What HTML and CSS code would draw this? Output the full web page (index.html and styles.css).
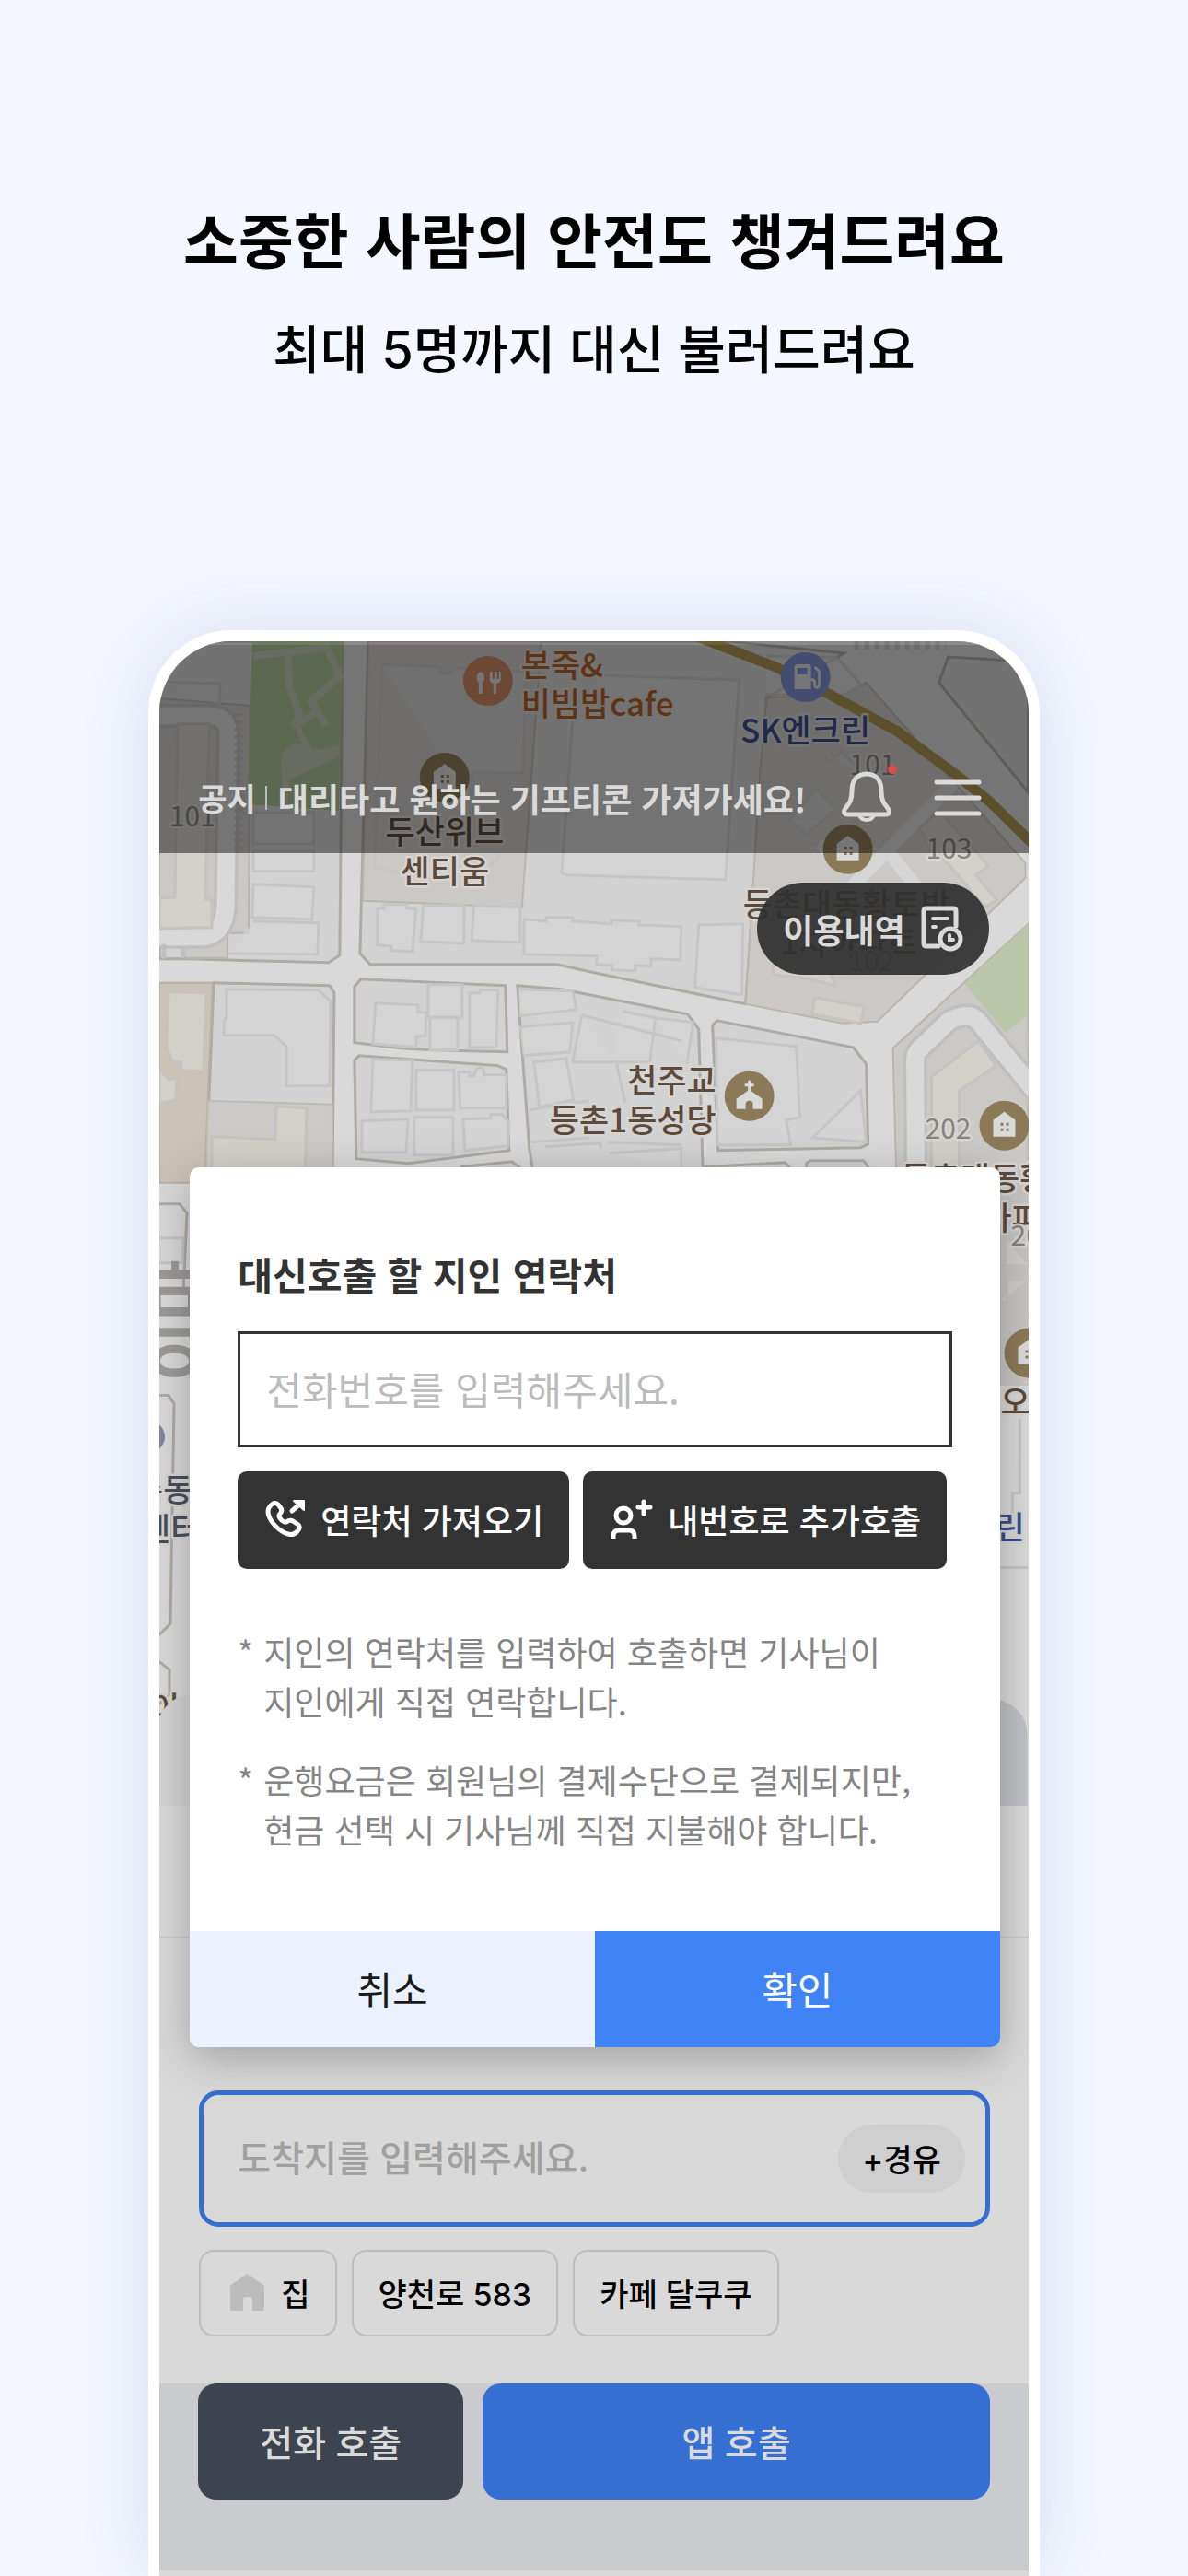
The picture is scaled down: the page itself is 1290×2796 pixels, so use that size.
FILE: index.html
```html
<!DOCTYPE html>
<html lang="ko">
<head>
    <meta charset="UTF-8">
    <meta name="viewport" content="width=device-width, initial-scale=1.0">
    <title>대신호출</title>
    <link rel="stylesheet" href="styles.css">
</head>
<body>
    <header class="intro">
        <h1>소중한 사람의 안전도 챙겨드려요</h1>
        <p>최대 5명까지 대신 불러드려요</p>
    </header>

    <main class="phone">
        <section class="map-area">
            <svg class="map" viewBox="173 696 944 1265" preserveAspectRatio="xMidYMin slice" aria-hidden="true">
                <defs>
                    <g id="house">
                        <circle r="27" fill="#8b7a57"/>
                        <path d="M0-15 12-6V12H-12V-6Z" fill="#dadada"/>
                        <path d="M-4-3h3v3h-3zM2-3h3v3h-3zM-4 3h3v3h-3zM2 3h3v3h-3z" fill="#8b7a57"/>
                    </g>
                </defs>
                <rect x="173" y="696" width="944" height="1265" fill="#d9d9d9"/>

                <!-- blocks -->
                <g class="block">
                    <path d="M173 696H372L369 1037 357 1045 203 1041H173Z"/>
                    <path d="M400 696H790L917 709 833 757 810 1090 650 1057 605 1047H402L391 1035Z"/>
                    <path d="M232 1067 358 1070 363 1078 361 1290H223Z"/>
                    <path d="M385 1071 392 1063 549 1070 551 1142 470 1140 435 1138 385 1132Z"/>
                    <path d="M385 1151 390 1146 541 1157 550 1161 553 1249 443 1263 387 1258Z"/>
                    <path d="M562 1070 610 1074 640 1080 747 1101 759 1117 764 1290H582L575 1247Z"/>
                    <path d="M774 1113 779 1108 927 1137 941 1155 943 1242 935 1246 780 1249Z"/>
                    <path d="M876 1267V1263L880 1260H938L944 1268M764 1267 853 1262 860 1270"/>
                    <path d="M500 1267 556 1261 568 1270"/>
                    <path d="M1030 713 1117 718V860L1020 741Z"/>
                </g>
                <path d="M173 1067H231L222 1284H173Z" fill="#ccc2b8" stroke="#b5afa5" stroke-width="2"/>
                <path d="M226 1195 361 1199V1290H223Z" fill="#cbcac8" stroke="#bebbb3" stroke-width="2"/>

                <!-- apartment complexes -->
                <g class="complex">
                    <path d="M400 696H588L567 985 394 978Z"/>
                    <path d="M833 757 915 755 941 741 1114 937V953L953 1109 915 1111 810 1090 826 832Z"/>
                    <path d="M970 1138 1060 1055 1117 1003V1290H974Z"/>
                    <path d="M173 758 272 766 270 1013 247 1013V1040H203Q198 1040 198 1032V1028H173Z"/>
                </g>

                <!-- park -->
                <path d="M274 696H373L368 880 269 873Z" fill="#adc196"/>
                <g fill="none" stroke="#c0c6b5" stroke-width="8" stroke-linejoin="round">
                    <path d="M275 712 355 703 369 734 338 761 354 788"/>
                    <path d="M313 708 314 745 325 775 320 787 345 772"/>
                    <path d="M322 785 328 800 337 815 368 818" stroke-width="6"/>
                </g>
                <path d="M305 830Q305 808 326 807L340 816 368 808V821L313 847V872L309 871Z" fill="#c0c6b5"/>
                <path d="M1048 1068 1117 1003V1102L1092 1121Z" fill="#bac7a9"/>
                <path d="M928 700h100" stroke="#c2c6bc" stroke-width="10" stroke-dasharray="5 6"/>

                <!-- inner roads -->
                <g fill="none" stroke-linejoin="round">
                    <g stroke="#bfbfbf" stroke-width="26">
                        <path d="M165 777H228Q249 777 248 800L245 985Q243 1015 220 1017H165"/>
                        <path d="M995 1290 994 1150Q994 1143 1001 1137L1030 1109Q1052 1097 1062 1108L1124 1184"/>
                    </g>
                    <g stroke="#d9d9d9" stroke-width="19">
                        <path d="M165 777H228Q249 777 248 800L245 985Q243 1015 220 1017H165"/>
                        <path d="M995 1290 994 1150Q994 1143 1001 1137L1030 1109Q1052 1097 1062 1108L1124 1184"/>
                    </g>
                    <path d="M1036 850 925 963M890 915 925 945M965 925 1010 980" stroke="#d6d6d6" stroke-width="14"/>
                    <path d="M259 774V925" stroke="#bdbcba" stroke-width="9" stroke-dasharray="3 5"/>
                </g>
                <path d="M178 1025V1041M199 1028V1040" stroke="#bfbfbf" stroke-width="5"/>

                <!-- buildings -->
                <g class="building">
                    <path d="M173 740 239 742 238 765"/>
                    <path d="M275 882h66v34h-66zM275 924h66v22h-66zM275 960 341 963 339 998 274 996ZM275 1000 346 1002 345 1036 248 1035"/>
                    <path d="M415 721 478 724V731H491V725L571 729 568 839 513 838 511 870M545 925 532 942M407 943 415 721M407 943 440 946"/>
                    <path d="M622 783 610 948 615 950 788 955 803 738 650 733"/>
                    <path d="M410 987 417 986V982H442V986L452 987 448 1033 425 1032V1027L410 1026Z"/>
                    <path d="M460 983H504V1024L457 1022ZM515 983 565 985V1023L512 1021Z"/>
                    <path d="M569 998 593 1000V996H622V1000L664 1003V999L694 1000V1004L740 1006 739 1042 707 1041V1049L690 1048V1054L665 1053V1048L648 1047V1038L569 1036Z"/>
                    <path d="M759 1004 807 1003 806 1080 755 1072Z"/>
                    <path d="M246 1074 346 1075 359 1087 358 1179H311V1136L298 1124H243L244 1106 246 1105Z"/>
                    <path d="M408 1089 454 1091V1099H463L462 1125H452V1137L405 1133ZM465 1069H502V1105H465ZM467 1104H497V1140H467ZM510 1078H521V1075H541L539 1137H510Z"/>
                    <path d="M405 1150 448 1151 446 1206 403 1207ZM452 1162H493V1205H452ZM498 1164H510V1168H515Q516 1159 521 1159 526 1159 526 1167H550V1203H500Z"/>
                    <path d="M393 1217 443 1215 441 1251H393ZM450 1213H492V1254H450ZM503 1215 533 1214V1210H546L552 1218V1244L505 1249Z"/>
                    <path d="M564 1074 622 1076 626 1096 564 1103M564 1115 622 1110 619 1142 568 1146M580 1153 615 1149 623 1194 586 1202ZM632 1102 740 1130M632 1102 622 1153H670M676 1098 712 1105 706 1153H666M712 1105 753 1110 746 1155M670 1155 679 1197M576 1205 640 1195M577 1240 640 1235M592 1245 652 1241V1247M660 1240 740 1243M662 1252 740 1247V1267"/>
                    <path d="M778 1127 865 1136 869 1213 854 1216 859 1243H779Z"/>
                    <path d="M883 1235 935 1184 941 1240Z"/>
                    <path d="M833 712 910 714 936 744 915 755 832 754"/>
                    <path d="M890 812 901 827 914 816 952 854M858 890 887 856 908 878 876 906Z"/>
                </g>
                <g class="apartment">
                    <path d="M193 786H227L223 976 230 977V1007L173 1008V975L190 974Z"/>
                    <path d="M183 1077 224 1078 221 1163 197 1162V1153L187 1152 181 1137Z"/>
                    <path d="M173 1160 183 1172 192 1171 191 1194 173 1198Z"/>
                    <path d="M300 1201 333 1203 331 1290H230V1234L299 1237Z"/>
                    <path d="M998 900 1020 880 1074 940 1060 950 1083 977 1070 985Z"/>
                    <path d="M1012 1169 1063 1130 1082 1157 1042 1184V1290H1012Z"/>
                    <path d="M840 1040 900 1050 907 1070 885 1064 840 1058ZM885 1083 939 1093 935 1111 882 1101Z"/>
                </g>
                <path class="highway" d="M750 688 845 725 898 752 975 794 1040 842 1075 870 1125 919"/>

                <!-- strips beside the dialog -->
                <g class="block open">
                    <path d="M173 1307H195L203 1317 199 1405"/>
                    <path d="M173 1515H183L189 1524 185 1763 173 1775"/>
                    <path d="M173 1804 184 1813V1840L173 1850"/>
                </g>
                <path d="M1086 1267H1117V1500L1086 1505Z" fill="#c7c5c4"/>
                <g class="building">
                    <path d="M173 1344H199L198 1371H173M1092 1345V1374H1117M1086 1413H1094V1389H1117M1086 1429H1117M1086 1503H1117M1108 1540V1621H1100V1650M1086 1702H1117"/>
                </g>
                <circle cx="162" cy="1560" r="17" fill="#8286a3"/>
                <path d="M1050 1841Q1116 1841 1116 1885V1961H1050Z" fill="#bfc1c6"/>

                <!-- pins -->
                <circle cx="530" cy="739" r="27" fill="#ca8562"/>
                <path d="M522 729a6 7 0 0 1 2 12v12h-4v-12a6 7 0 0 1 2-12ZM532 729v8q0 4 4 5v11h3v-11q5-1 5-5v-8h-2v8h-2v-8h-3v8h-2v-8Z" fill="#dadada"/>
                <circle cx="875" cy="735" r="27" fill="#7d8fd0"/>
                <path d="M863 748V724q0-3 3-3h12q3 0 3 3v24ZM866 725v7h11v-7Z" fill="#dadada" fill-rule="evenodd"/>
                <path d="M881 738q5-1 4 5 0 4 3 3 2 0 2-4V729l-5-5" fill="none" stroke="#dadada" stroke-width="3"/>
                <use href="#house" x="483" y="844"/>
                <use href="#house" x="921" y="922"/>
                <use href="#house" x="1091" y="1222"/>
                <use href="#house" x="1118" y="1469"/>
                <circle cx="814" cy="1190" r="27" fill="#8b7a57"/>
                <path d="M814 1173v12M809 1178h10" stroke="#dadada" stroke-width="3"/>
                <path d="M814 1183 828 1193V1204H818V1199q0-4-4-4t-4 4v5H800V1193Z" fill="#dadada"/>

                <g class="label">
                    <text x="566" y="735" class="food">본죽&amp;</text>
                    <text x="566" y="777" class="food">비빔밥cafe</text>
                    <text x="483" y="916" text-anchor="middle">두산위브</text>
                    <text x="483" y="959" text-anchor="middle">센티움</text>
                    <text x="875" y="806" text-anchor="middle" class="station">SK엔크린</text>
                    <text x="807" y="995">등촌대동황토방</text>
                    <text x="922" y="1036" text-anchor="middle">1차아파트</text>
                    <text x="778" y="1186" text-anchor="end">천주교</text>
                    <text x="778" y="1229" text-anchor="end">등촌1동성당</text>
                    <text x="979" y="1292">등촌대동황</text>
                    <text x="1067" y="1335">아파트</text>
                    <text x="1087" y="1535">오</text>
                    <text x="1081" y="1672" class="station">린</text>
                    <text x="145" y="1631" class="office">촌동</text>
                    <text x="153" y="1674" class="office">센터</text>
                    <text x="163" y="1868">이</text>
                </g>
                <g class="number">
                    <text x="184" y="897">101</text>
                    <text x="923" y="841">101</text>
                    <text x="922" y="1054">102</text>
                    <text x="1006" y="932">103</text>
                    <text x="1005" y="1236">202</text>
                    <text x="1098" y="1352">203</text>
                </g>
                <text class="road-name" transform="translate(221 1500) rotate(-90)">이마</text>
                <path d="M173 1961V1864Q184 1841 206 1841V1961Z" fill="#d3d3d3"/>
            </svg>

            <div class="map-controls">
                <div class="topbar">
                    <span class="notice-tag">공지</span>
                    <span class="notice-line"></span>
                    <a class="notice" href="#">대리타고 원하는 기프티콘 가져가세요!</a>
                    <button class="bell" type="button" aria-label="알림">
                        <svg width="60" height="60" viewBox="0 0 60 60" fill="none" stroke="#dadada" stroke-width="5">
                            <path d="M30 4C18 4 14 13 14 23C14 33 11 36 8 40C4 45 5 48 10 48H50C55 48 56 45 52 40C49 36 46 33 46 23C46 13 42 4 30 4Z"/>
                            <path d="M22 49Q24 54 30 54Q36 54 38 49" stroke-width="4"/>
                        </svg>
                        <span class="dot"></span>
                    </button>
                    <button type="button" aria-label="메뉴">
                        <svg width="52" height="40" viewBox="0 0 52 40" stroke="#dadada" stroke-width="5" stroke-linecap="round">
                            <path d="M3 3H49M3 20H49M3 37H49"/>
                        </svg>
                    </button>
                </div>
                <button class="history" type="button">
                    이용내역
                    <svg width="46" height="50" viewBox="0 0 46 50" fill="none" stroke="#dadada" stroke-width="5" stroke-linecap="round">
                        <path d="M19 44H6Q3 44 3 41V6Q3 3 6 3H35Q38 3 38 6V22"/>
                        <path d="M13 14H29M13 23H16" stroke-width="4"/>
                        <circle cx="32" cy="36" r="11"/>
                        <path d="M31 32V37H35" stroke-width="4"/>
                    </svg>
                </button>
            </div>
        </section>

        <section class="sheet">
            <div class="destination">
                <label class="hidden" for="destination">도착지</label>
                <input type="text" id="destination" placeholder="도착지를 입력해주세요.">
                <button class="via" type="button">+경유</button>
            </div>
            <div class="places">
                <button class="place home" type="button">
                    <svg width="37" height="40" viewBox="0 0 37 40" fill="#bcbcbc">
                        <path d="M18 0 36 12Q37 13 37 15V38Q37 40 35 40H24V28Q24 25 21 25H17Q14 25 14 28V40H2Q0 40 0 38V15Q0 13 1 12Z"/>
                    </svg>
                    집
                </button>
                <button class="place" type="button">양천로 583</button>
                <button class="place" type="button">카페 달쿠쿠</button>
            </div>
            <div class="actions">
                <button class="call-phone" type="button">전화 호출</button>
                <button class="call-app" type="button">앱 호출</button>
            </div>
        </section>

        <div class="overlay">
            <form class="dialog" role="dialog">
                <div class="dialog-body">
                    <label class="dialog-title" for="phoneNumber">대신호출 할 지인 연락처</label>
                    <input class="phone-input" type="tel" id="phoneNumber" placeholder="전화번호를 입력해주세요.">
                    <div class="shortcuts">
                        <button type="button">
                            <svg width="44" height="44" viewBox="0 0 44 44" fill="none" stroke="#fff" stroke-width="5" stroke-linejoin="round">
                                <path d="M5 8Q10 2 14 6L17 10Q19 13 16 16Q14 18 16 21Q20 26 23 25Q27 22 30 24L36 28Q39 31 35 35Q29 42 18 35Q9 29 5 21Q1 13 5 8Z"/>
                                <path d="M29 13 37 6" stroke-linecap="round"/>
                                <path d="M31 2H42V12Z" fill="#fff" stroke-width="2"/>
                            </svg>
                            연락처 가져오기
                        </button>
                        <button type="button">
                            <svg width="46" height="44" viewBox="0 0 46 44" fill="none" stroke="#fff" stroke-width="5">
                                <circle cx="14" cy="18" r="8"/>
                                <path d="M3 43V40Q3 34 9 34H20Q26 34 26 40V43"/>
                                <path d="M36 3V16M30 9H43" stroke-linecap="round"/>
                            </svg>
                            내번호로 추가호출
                        </button>
                    </div>
                    <ul class="notes">
                        <li>지인의 연락처를 입력하여 호출하면 기사님이<br>지인에게 직접 연락합니다.</li>
                        <li>운행요금은 회원님의 결제수단으로 결제되지만,<br>현금 선택 시 기사님께 직접 지불해야 합니다.</li>
                    </ul>
                </div>
                <div class="dialog-buttons">
                    <button class="cancel" type="button">취소</button>
                    <button class="confirm" type="button">확인</button>
                </div>
            </form>
        </div>
    </main>
</body>
</html>
```
FILE: styles.css
```css
* {
    box-sizing: border-box;
}
html {
    height: 100%;
}
body {
    display: flex;
    flex-direction: column;
    height: 100%;
    margin: 0;
    overflow: hidden;
    background: #f4f7ff;
    color: #000;
    font-family: "Noto Sans CJK KR", sans-serif;
}
button,
input {
    margin: 0;
    padding: 0;
    border: 0;
    background: none;
    color: inherit;
    font: inherit;
}
button {
    cursor: pointer;
    white-space: nowrap;
}
svg {
    display: block;
    flex: none;
}
.hidden {
    position: absolute;
    width: 1px;
    height: 1px;
    overflow: hidden;
    clip-path: inset(50%);
}

/* Intro */
.intro {
    padding: 210px 20px 254px;
    text-align: center;
}
.intro h1 {
    margin: 0 0 24px;
    font-size: 65px;
    font-weight: 700;
    line-height: 96px;
}
.intro p {
    margin: 0;
    font-family: Inter, "Noto Sans CJK KR", sans-serif;
    font-size: 56px;
    font-weight: 500;
    line-height: 100px;
}

/* Phone */
.phone {
    position: relative;
    flex: 1 0 auto;
    width: 75%;
    margin: 0 auto;
    border: 12px solid #fff;
    border-bottom: 0;
    border-radius: 90px 90px 0 0;
    overflow: hidden;
    background: #d9d9d9;
    box-shadow: 0 0 80px rgba(40, 70, 140, 0.14);
    font-family: Inter, "Noto Sans CJK KR", sans-serif;
}
.map-area {
    display: grid;
}
.map,
.map-controls {
    grid-area: 1 / 1;
}
.map {
    width: 100%;
}

/* Map drawing */
.block {
    fill: #d2d2d2;
    stroke: #aeaba3;
    stroke-width: 3;
}
.open {
    fill: none;
}
.complex {
    fill: #cbc9c6;
    stroke: #bab6ad;
    stroke-width: 2;
}
.building {
    fill: #d5d5d5;
    fill-opacity: 0.6;
    stroke: #c5c5c5;
    stroke-width: 3;
}
.apartment {
    fill: #d2d0c9;
    stroke: #c4c3bf;
    stroke-width: 3;
}
.highway {
    fill: none;
    stroke: #ab9250;
    stroke-width: 11;
}
.label,
.number {
    fill: #5c4a3d;
    stroke: #d6d5d3;
    stroke-width: 5;
    stroke-linejoin: round;
    paint-order: stroke;
    font-family: "Noto Sans CJK KR", sans-serif;
    font-size: 35px;
    font-weight: 500;
}
.number {
    fill: #8b827b;
    font-size: 30px;
    font-weight: 400;
}
.label .food {
    fill: #b0602a;
}
.label .station {
    fill: #3c4c8a;
}
.label .office {
    fill: #4b4e5c;
}
.road-name {
    fill: #9b9a97;
    font-family: "Noto Sans CJK KR", sans-serif;
    font-size: 72px;
    font-weight: 700;
}

/* Map controls */
.topbar {
    display: flex;
    align-items: center;
    height: 230px;
    padding: 136px 51px 30px 42px;
    border-top: 4px solid rgba(0, 0, 0, 0.36);
    background: rgba(0, 0, 0, 0.46);
    background-clip: padding-box;
    color: #dadada;
    font-family: "Noto Sans CJK KR", sans-serif;
    font-size: 36px;
    font-weight: 700;
    line-height: 60px;
    white-space: nowrap;
}
.notice-tag {
    font-size: 34px;
}
.notice-line {
    width: 2px;
    height: 26px;
    margin: 0 12px 0 10px;
    background: #bdbdbd;
}
.notice {
    color: inherit;
    text-decoration: none;
}
.bell {
    position: relative;
    margin: 0 43px 0 auto;
}
.dot {
    position: absolute;
    top: -6px;
    right: -3px;
    width: 10px;
    height: 10px;
    border-radius: 50%;
    background: #dc4a4a;
}
.history {
    display: flex;
    align-items: center;
    gap: 17px;
    height: 100px;
    margin: 32px 43px 0 auto;
    padding: 0 28px;
    border-radius: 50px;
    background: rgba(48, 48, 48, 0.93);
    color: #dadada;
    font-size: 36px;
    font-weight: 700;
}

/* Bottom sheet */
.sheet {
    margin-top: 142px;
    border-top: 2px solid #c3c6cb;
}
.destination {
    display: flex;
    align-items: center;
    height: 148px;
    margin: 165px 42px 25px 43px;
    padding: 0 22px 0 37px;
    border: 5px solid #356fd0;
    border-radius: 21px;
}
.destination input {
    flex: 1;
    min-width: 0;
    font-size: 39px;
    font-weight: 500;
    line-height: 60px;
}
.destination input::placeholder {
    color: #a0a0a0;
    opacity: 1;
}
.via {
    height: 74px;
    padding: 0 26px 2px;
    border-radius: 37px;
    background: #cfcfcf;
    font-size: 34px;
    font-weight: 500;
}
.places {
    display: flex;
    gap: 16px;
    margin: 0 42px 51px 43px;
}
.place {
    display: flex;
    align-items: center;
    height: 94px;
    padding: 0 27px 2px;
    border: 2px solid #bdbdbd;
    border-radius: 16px;
    font-size: 34px;
    font-weight: 500;
}
.home {
    gap: 18px;
    padding-left: 32px;
}
.actions {
    display: flex;
    gap: 21px;
    height: 203px;
    padding: 0 42px 77px;
    background: #cacbcf;
}
.actions button {
    border-radius: 20px;
    padding-bottom: 2px;
    color: #dadada;
    font-size: 39px;
    font-weight: 500;
}
.call-phone {
    flex: 0 1 288px;
    background: #3e444f;
}
.call-app {
    flex: 1;
    background: #356fd1;
}

/* Dialog */
.overlay {
    position: absolute;
    inset: 0;
    padding: 571px 31px 0 33px;
}
.dialog {
    border-radius: 10px;
    overflow: hidden;
    background: #fff;
    box-shadow: 0 12px 48px rgba(0, 0, 0, 0.26);
    font-family: "Noto Sans CJK KR", sans-serif;
}
.dialog-body {
    padding: 84px 52px 84px;
}
.dialog-title {
    display: block;
    margin-bottom: 32px;
    color: #333;
    font-size: 41px;
    font-weight: 700;
    line-height: 62px;
}
.phone-input {
    display: block;
    width: 100%;
    height: 126px;
    padding: 0 28px 3px;
    border: 3px solid #333;
    font-size: 42px;
}
.phone-input::placeholder {
    color: #bbb;
    opacity: 1;
}
.shortcuts {
    display: flex;
    gap: 15px;
    margin: 26px 0 62px;
}
.shortcuts button {
    display: flex;
    align-items: center;
    gap: 16px;
    height: 106px;
    padding: 0 28px 2px 30px;
    border-radius: 10px;
    background: #333;
    color: #fff;
    font-size: 36px;
    font-weight: 500;
}
.notes {
    margin: 0;
    padding: 0;
    list-style: none;
    color: #858585;
    font-size: 36px;
    line-height: 54px;
}
.notes li {
    display: flex;
    white-space: nowrap;
}
.notes li::before {
    content: "*";
    flex: 0 0 28px;
}
.notes li + li {
    margin-top: 31px;
}
.dialog-buttons {
    display: flex;
}
.dialog-buttons button {
    flex: 1;
    height: 126px;
    padding-bottom: 3px;
    font-size: 42px;
}
.cancel {
    background: #ebf2fe;
    color: #1a1a1a;
}
.confirm {
    background: #3f83f4;
    color: #fff;
}
```
